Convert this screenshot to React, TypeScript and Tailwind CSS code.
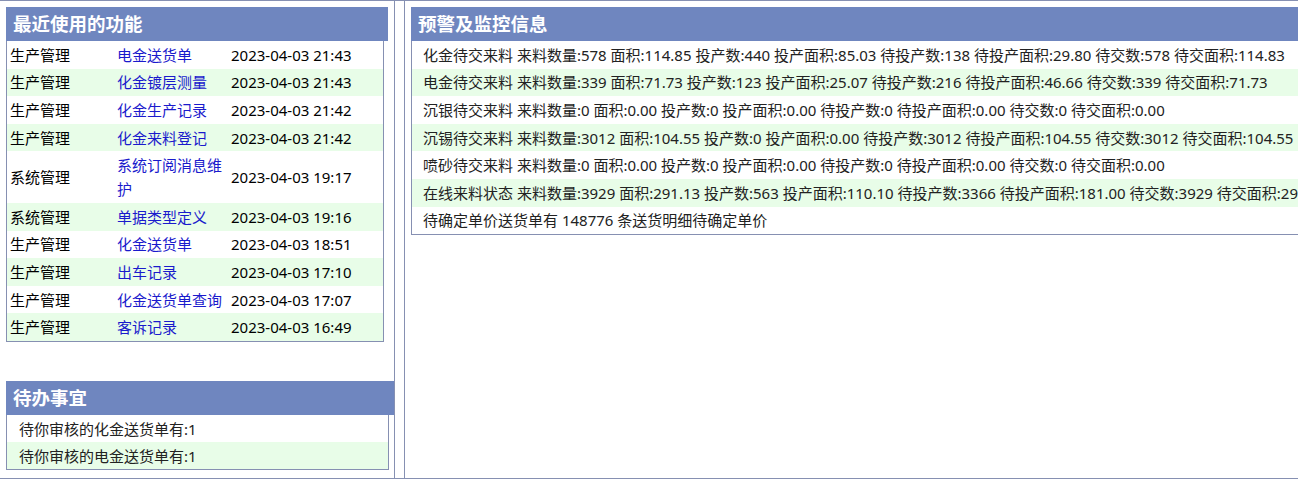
import React from 'react';

const recent = [
  { mod: '生产管理', name: '电金送货单', time: '2023-04-03 21:43' },
  { mod: '生产管理', name: '化金镀层测量', time: '2023-04-03 21:43' },
  { mod: '生产管理', name: '化金生产记录', time: '2023-04-03 21:42' },
  { mod: '生产管理', name: '化金来料登记', time: '2023-04-03 21:42' },
  { mod: '系统管理', name: '系统订阅消息维护', time: '2023-04-03 19:17' },
  { mod: '系统管理', name: '单据类型定义', time: '2023-04-03 19:16' },
  { mod: '生产管理', name: '化金送货单', time: '2023-04-03 18:51' },
  { mod: '生产管理', name: '出车记录', time: '2023-04-03 17:10' },
  { mod: '生产管理', name: '化金送货单查询', time: '2023-04-03 17:07' },
  { mod: '生产管理', name: '客诉记录', time: '2023-04-03 16:49' },
];

const todos = ['待你审核的化金送货单有:1', '待你审核的电金送货单有:1'];

const alerts = [
  '化金待交来料 来料数量:578 面积:114.85 投产数:440 投产面积:85.03 待投产数:138 待投产面积:29.80 待交数:578 待交面积:114.83',
  '电金待交来料 来料数量:339 面积:71.73 投产数:123 投产面积:25.07 待投产数:216 待投产面积:46.66 待交数:339 待交面积:71.73',
  '沉银待交来料 来料数量:0 面积:0.00 投产数:0 投产面积:0.00 待投产数:0 待投产面积:0.00 待交数:0 待交面积:0.00',
  '沉锡待交来料 来料数量:3012 面积:104.55 投产数:0 投产面积:0.00 待投产数:3012 待投产面积:104.55 待交数:3012 待交面积:104.55',
  '喷砂待交来料 来料数量:0 面积:0.00 投产数:0 投产面积:0.00 待投产数:0 待投产面积:0.00 待交数:0 待交面积:0.00',
  '在线来料状态 来料数量:3929 面积:291.13 投产数:563 投产面积:110.10 待投产数:3366 待投产面积:181.00 待交数:3929 待交面积:291.13',
  '待确定单价送货单有 148776 条送货明细待确定单价',
];

const Title = ({ text, className }: { text: string; className: string }) => (
  <div className={`h-[34px] bg-[#6f86bf] pl-[7px] flex items-center text-white font-bold text-[18.5px] leading-none ${className}`}>
    {text}
  </div>
);

export default function App() {
  return (
    <div
      className="w-[1298px] h-[504px] overflow-hidden bg-white text-[15px] text-black"
      style={{ fontFamily: '"Noto Sans", "Noto Sans CJK SC", sans-serif' }}
    >
      <div className="flex h-[479px] border-t border-b border-[#8690b2]">
        {/* left frame */}
        <div className="w-[395px] shrink-0 border-r border-[#8690b2] pl-[6px] pt-[6px]">
          <Title text="最近使用的功能" className="w-[382px]" />
          <div className="w-[378px] border border-t-0 border-[#8690b2]">
            {recent.map((r, i) => (
              <div
                key={i}
                className={`grid grid-cols-[106px_114px_1fr] items-center leading-[24px] py-[1.8px] ${i % 2 ? 'bg-[#e8fde8]' : 'bg-white'}`}
              >
                <span className="pl-[3px]">{r.mod}</span>
                <span className="pl-[4px] pr-[4px] text-[#1a1acc]">{r.name}</span>
                <span className="pl-[4px] whitespace-nowrap">{r.time}</span>
              </div>
            ))}
          </div>

          <div className="mt-[39px]">
            <Title text="待办事宜" className="w-[388px]" />
            <div className="w-[383px] border border-t-0 border-[#8690b2]">
              {todos.map((t, i) => (
                <div
                  key={i}
                  className={`pl-[12px] leading-[24px] py-[1.6px] text-[#222] ${i % 2 ? 'bg-[#e8fde8]' : 'bg-white'}`}
                >
                  {t}
                </div>
              ))}
            </div>
          </div>
        </div>

        {/* right frame */}
        <div className="ml-[9px] flex-1 min-w-0 overflow-hidden border-l border-[#8690b2] pl-[6px] pt-[6px]">
          <div className="w-[980px]">
            <Title text="预警及监控信息" className="" />
            <div className="border border-t-0 border-[#8690b2]">
              {alerts.map((a, i) => (
                <div
                  key={i}
                  className={`pl-[11px] whitespace-nowrap leading-[24px] py-[1.8px] text-[#222] ${i % 2 ? 'bg-[#e8fde8]' : 'bg-white'}`}
                >
                  {a}
                </div>
              ))}
            </div>
          </div>
        </div>
      </div>
    </div>
  );
}
